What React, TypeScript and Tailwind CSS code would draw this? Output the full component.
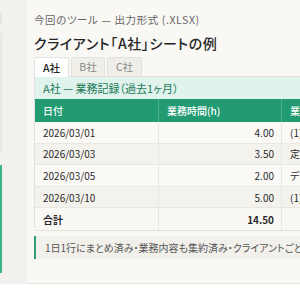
import React from 'react';

const rows = [
  { date: '2026/03/01', hours: '4.00', task: '(1)資料作成・レビュー対応' },
  { date: '2026/03/03', hours: '3.50', task: '定例ミーティング・議事録' },
  { date: '2026/03/05', hours: '2.00', task: 'データ整理・集計' },
  { date: '2026/03/10', hours: '5.00', task: '(1)資料作成・(2)修正対応' },
];

const App = () => {
  return (
    <div
      className="w-[300px] h-[300px] bg-white overflow-hidden [font-feature-settings:'palt']"
      style={{ fontFamily: '"Noto Sans CJK JP", "Noto Sans", sans-serif' }}
    >
      <div className="flex h-[284px]">
        {/* cut-off sidebar */}
        <div className="w-[27px] shrink-0 bg-[#f2f1ed] flex flex-col pt-[13px]">
          <div className="w-[2px] h-[12px] bg-[#e6e5e0]" />
          <div className="w-[2px] h-[120px] mt-[8px] bg-[#e9e8e3]" />
          <div className="w-[2px] h-[108px] mt-[12px] bg-[#3fb389]" />
        </div>

        {/* main */}
        <div className="flex-1 min-w-0 bg-[#f9f8f5] border-b border-[#e4e3de] overflow-hidden pl-[7px] pt-[12px]">
          <p className="text-[10.5px] leading-[16px] text-[#666] whitespace-nowrap tracking-[0.6px]">
            今回のツール — 出力形式 (.XLSX)
          </p>
          <h2 className="mt-[6px] text-[14px] leading-[18px] font-medium text-[#262626] whitespace-nowrap tracking-[0.6px]">
            クライアント「A社」シートの例
          </h2>

          <div className="mt-[5px] flex gap-[2px] h-[19px] items-end">
            <div className="w-[35px] h-[20px] -mb-px flex items-center justify-center rounded-t-[3px] border border-b-0 border-[#e2e1dc] bg-white text-[10.5px] font-medium text-[#222] relative z-10">
              A社
            </div>
            <div className="w-[34px] h-[19px] flex items-center justify-center rounded-t-[3px] border border-b-0 border-[#e2e1dc] bg-[#efeee9] text-[10.5px] text-[#888]">
              B社
            </div>
            <div className="w-[35px] h-[19px] flex items-center justify-center rounded-t-[3px] border border-b-0 border-[#e2e1dc] bg-[#efeee9] text-[10.5px] text-[#888]">
              C社
            </div>
          </div>

          <div className="w-[420px] border border-[#e2e1dc] rounded-b-[4px] overflow-hidden">
            <div className="h-[22px] flex items-center px-[8px] bg-[#e0f3ec] text-[11px] text-[#1d7a58] whitespace-nowrap">
              A社 — 業務記録（過去1ヶ月）
            </div>
            <div className="flex h-[23px] bg-[#229b73] text-white text-[10px] font-medium">
              <div className="w-[123px] px-[8px] flex items-center">日付</div>
              <div className="w-[123px] px-[8px] flex items-center border-l border-[#4fb08e]">業務時間(h)</div>
              <div className="flex-1 px-[8px] flex items-center border-l border-[#4fb08e] whitespace-nowrap">業務内容</div>
            </div>
            {rows.map((r, i) => (
              <div
                key={r.date}
                className={`flex h-[21.6px] text-[10px] text-[#2a2a2a] border-b border-[#e8e7e2] ${
                  i % 2 === 0 ? 'bg-[#faf9f6]' : 'bg-[#f3f2ed]'
                }`}
              >
                <div className="w-[123px] px-[8px] flex items-center">{r.date}</div>
                <div className="w-[123px] px-[7px] flex items-center justify-end border-l border-[#e8e7e2]">{r.hours}</div>
                <div className="flex-1 px-[8px] flex items-center border-l border-[#e8e7e2] whitespace-nowrap">{r.task}</div>
              </div>
            ))}
            <div className="flex h-[22px] text-[10px] font-bold text-[#2a2a2a] bg-[#f9f8f5]">
              <div className="w-[123px] px-[8px] flex items-center">合計</div>
              <div className="w-[123px] px-[7px] flex items-center justify-end border-l border-[#e8e7e2]">14.50</div>
              <div className="flex-1 border-l border-[#e8e7e2]" />
            </div>
          </div>

          <div className="mt-[5px] w-[420px] h-[23px] flex items-center pl-[9px] border-l-[2px] border-[#2f9e76] bg-[#f1f0eb] text-[10px] text-[#555] whitespace-nowrap">
            1日1行にまとめ済み・業務内容も集約済み・クライアントごとにシートを分割
          </div>
        </div>
      </div>
    </div>
  );
};

export default App;
